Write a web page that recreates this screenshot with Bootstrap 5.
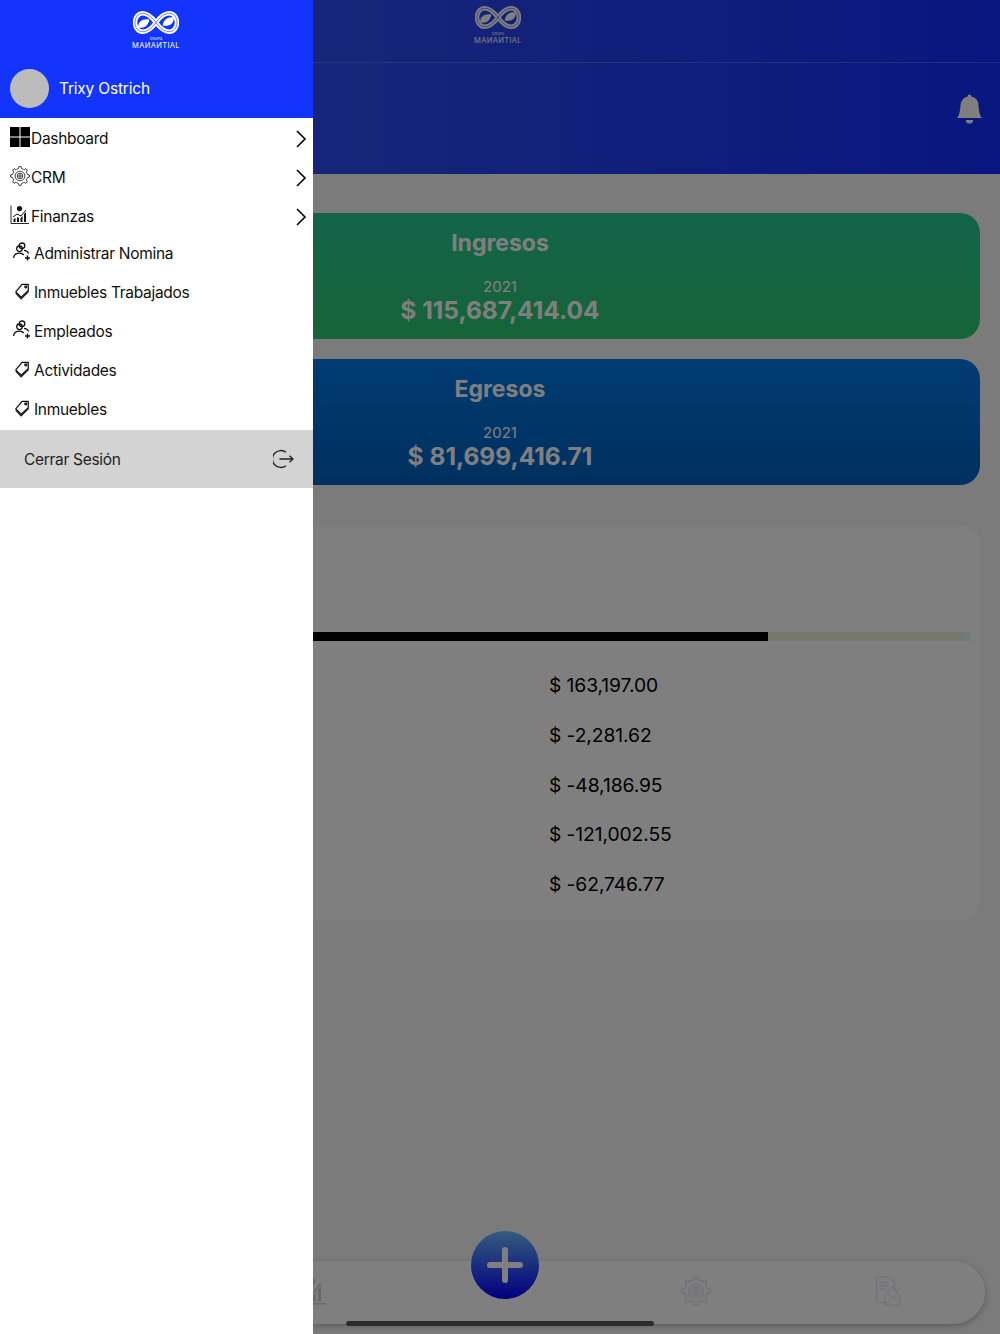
<!DOCTYPE html>
<html lang="es">
  <head>
    <meta charset="UTF-8" />
    <title>Grupo Manantial</title>
    <link
      href="https://cdn.jsdelivr.net/npm/bootstrap@5.3.0/dist/css/bootstrap.min.css"
      rel="stylesheet"
    />
    <style>
      html,
      body {
        height: 1334px;
        overflow: hidden;
      }

      body {
        font-family: Inter, "Liberation Sans", sans-serif;
        background-color: #f6f6f6;
        color: #000;
      }

      .app-page {
        height: 1334px;
      }

      /* header behind the drawer */
      .top-head {
        height: 174px;
        background: linear-gradient(90deg, #3552ff 0%, #2b49f0 40%, #142cff 100%);
        color: #fff;
      }

      .top-logo-bar {
        height: 63px;
        border-bottom: 1px solid rgba(255, 255, 255, 0.2);
        padding-top: 6px;
        padding-left: 474px;
        --logo-cut: #2b49f0;
      }

      .top-bell-bar {
        padding-top: 31px;
        padding-right: 16px;
      }

      .bell-icon {
        width: 29px;
        height: 30px;
      }

      .brand-logo {
        width: 48px;
        color: #fff;
      }

      .brand-logo svg {
        display: block;
        width: 46px;
        height: 23px;
        margin: 0 auto;
      }

      .brand-small {
        font-size: 3.5px;
        line-height: 4px;
        margin-top: 3px;
      }

      .brand-name {
        font-size: 7.5px;
        line-height: 9px;
        font-weight: 400;
        letter-spacing: 0.35px;
        white-space: nowrap;
      }

      /* summary cards */
      .main-area {
        padding: 39px 20px 0;
      }

      .sum-list {
        gap: 20px;
      }

      .sum-card {
        height: 126px;
        border-radius: 20px;
        color: #fff;
        padding-top: 15px;
      }

      .sum-green {
        background: linear-gradient(180deg, #28c896 0%, #2cc86e 100%);
      }

      .sum-blue {
        background: linear-gradient(180deg, #0078e6 0%, #0060be 100%);
      }

      .sum-title {
        font-size: 23px;
        line-height: 30px;
        font-weight: 700;
      }

      .sum-year {
        font-size: 15px;
        line-height: 20px;
        margin-top: 19px;
      }

      .sum-amount {
        font-size: 24.5px;
        line-height: 28px;
        margin-top: -1px;
        font-weight: 700;
      }

      .detail-card {
        height: 395px;
        border-radius: 20px;
        background-color: #fff;
        padding-top: 107px;
        margin-top: 40px;
      }

      .bar-track {
        height: 9px;
        margin-right: 10px;
        background-color: #e6f5f5;
      }

      .bar-fill {
        height: 9px;
        background-color: #000;
      }

      .bar-rest {
        background-color: #f0f0d2;
      }

      .amount-list {
        padding-left: 529px;
        padding-top: 20px;
        font-size: 19.3px;
        line-height: 49.75px;
        letter-spacing: -0.1px;
        margin: 0;
      }

      /* bottom tabs */
      .tab-area {
        position: absolute;
        left: 15px;
        right: 15px;
        top: 1261px;
        height: 63px;
        border-radius: 32px;
        background-color: #fff;
        box-shadow: 0 2px 6px rgba(0, 0, 0, 0.25);
      }

      .tab-icon {
        width: 30px;
        height: 30px;
        color: #e0e0f0;
        margin-top: 15px;
      }

      .tab-chart {
        margin-left: 12px;
        color: #d0d0d8;
      }

      .tab-gear {
        margin-left: 4px;
      }

      .add-btn {
        position: absolute;
        left: 456px;
        top: -30px;
        width: 68px;
        height: 68px;
        border-radius: 50%;
        background: linear-gradient(180deg, #6ab8ff 0%, #0000ff 100%);
      }

      .add-btn svg {
        width: 36px;
        height: 36px;
      }

      /* dim layer and drawer */
      .dim-layer {
        position: absolute;
        inset: 0;
        background-color: rgba(0, 0, 0, 0.5);
      }

      .home-line {
        position: absolute;
        left: 346px;
        top: 1321px;
        width: 308px;
        height: 5px;
        border-radius: 3px;
        background-color: #2c2c2c;
      }

      .side-drawer {
        position: absolute;
        left: 0;
        top: 0;
        bottom: 0;
        width: 312.5px;
        background-color: #fff;
      }

      .side-head {
        height: 118.5px;
        background-color: #1234fb;
        color: #fff;
        padding-top: 11px;
        border-bottom: 1px solid #fff;
        --logo-cut: #1234fb;
      }

      .side-logo {
        margin-left: 132px;
      }

      .side-user {
        margin-top: 19px;
        padding-left: 10px;
        gap: 10px;
        font-size: 15.5px;
        letter-spacing: -0.2px;
      }

      .side-avatar {
        width: 39px;
        height: 39px;
        border-radius: 50%;
        background-color: #bcbcbc;
      }

      .menu-row {
        height: 39px;
        padding: 2px 6px 0 10px;
        font-size: 15.5px;
        letter-spacing: -0.3px;
        color: #111;
      }

      .menu-sub {
        margin-top: -2px;
      }

      .sub-row {
        height: 39px;
        padding: 2px 0 0 12px;
        font-size: 15.5px;
        letter-spacing: -0.3px;
        color: #111;
      }

      .row-icon {
        width: 20px;
        height: 20px;
        margin-top: -4px;
        margin-right: 1px;
        flex-shrink: 0;
      }

      .sub-icon {
        width: 20px;
        height: 20px;
        margin-right: 2px;
        margin-top: -4px;
        flex-shrink: 0;
      }

      .row-arrow {
        width: 12px;
        height: 20px;
        margin-left: auto;
        margin-top: -1px;
      }

      .logout-row {
        height: 58px;
        margin-top: 1.5px;
        padding: 0 19px 0 24px;
        background-color: #d3d3d3;
        font-size: 15.5px;
        letter-spacing: -0.3px;
        color: #222;
      }

      .logout-label {
        padding-top: 2px;
      }

      .logout-icon {
        width: 21px;
        height: 20px;
        margin-left: auto;
      }
    </style>
  </head>
  <body class="position-relative">
    <svg width="0" height="0" class="position-absolute">
      <defs>
        <symbol id="ico-logo" viewBox="0 0 45 22">
          <path
            d="M22.5 11C17 4 13 2 9.5 2 5 2 2 6 2 11s3 9 7.5 9c3.5 0 8-2 13-9s9.5-9 13-9c4.5 0 7.5 4 7.5 9s-3 9-7.5 9c-3.5 0-8-2-13-9"
            fill="none"
            stroke="currentColor"
            stroke-width="4.4"
          />
          <path
            d="M22.5 11C17 4 13 2 9.5 2 5 2 2 6 2 11s3 9 7.5 9c3.5 0 8-2 13-9s9.5-9 13-9c4.5 0 7.5 4 7.5 9s-3 9-7.5 9c-3.5 0-8-2-13-9"
            fill="none"
            stroke="var(--logo-cut)"
            stroke-width="0.6"
          />
          <path
            d="M5 16c0-6 4-9 11-8-1 6-5 9-11 8zM40 6c0 6-4 9-11 8 1-6 5-9 11-8z"
            fill="currentColor"
          />
        </symbol>
        <symbol id="ico-gear" viewBox="0 0 20 20">
          <g fill="none" stroke="currentColor" stroke-width="0.8">
            <path
              id="gear-tooth"
              d="M7.13 3.07Q8 2.8 8.5 2.6L8.9.6h2.2l.4 2Q12 2.8 12.87 3.07"
            />
            <use href="#gear-tooth" transform="rotate(45 10 10)" />
            <use href="#gear-tooth" transform="rotate(90 10 10)" />
            <use href="#gear-tooth" transform="rotate(135 10 10)" />
            <use href="#gear-tooth" transform="rotate(180 10 10)" />
            <use href="#gear-tooth" transform="rotate(225 10 10)" />
            <use href="#gear-tooth" transform="rotate(270 10 10)" />
            <use href="#gear-tooth" transform="rotate(315 10 10)" />
            <circle cx="10" cy="10" r="4.8" />
            <circle cx="10" cy="10" r="2.8" />
            <path d="M7.5 10h5M10 7.2v5.6" />
          </g>
        </symbol>
        <symbol id="ico-chart" viewBox="0 0 20 20">
          <path
            d="M1 .5v18h18"
            fill="none"
            stroke="currentColor"
            stroke-width="0.9"
          />
          <path
            d="M3.5 17v-3l2-1v4zM7 17v-5l2 1v4zM10.5 17v-4l2-2v6zM14 17V9l2-2v10z"
            fill="currentColor"
          />
          <path d="M3 12l4-3 4 2 5-6" fill="none" stroke="currentColor" stroke-width="1" />
          <circle cx="9.5" cy="3.6" r="2.6" fill="currentColor" />
        </symbol>
        <symbol id="ico-user" viewBox="0 0 20 20">
          <g fill="none" stroke="currentColor" stroke-width="1.3">
            <circle cx="10" cy="3.8" r="2.8" />
            <circle cx="7.5" cy="6.8" r="2.8" />
            <path d="M1.5 16c.5-3.3 3-4.8 6-4.8 2 0 3.4.6 4.3 1.8M12 8.3c2.2.2 3.8 1.2 4.8 3.2" />
            <path d="M15.5 13.5v5M13 16h5" stroke-width="1.4" />
          </g>
        </symbol>
        <symbol id="ico-tag" viewBox="-2 -2 24 24">
          <g fill="none" stroke="currentColor" stroke-width="1.5" stroke-linejoin="round">
            <path d="M10 2h7.5v7.5L9 17.5 2.5 11z" />
            <path d="M2.5 12.5 9 19.5l9-9" />
            <circle cx="14.5" cy="5" r="1.2" />
          </g>
        </symbol>
        <symbol id="ico-doc" viewBox="0 0 30 34">
          <g fill="none" stroke="currentColor" stroke-width="1.1">
            <path d="M14 30H2V1h14l6 6v8" />
            <path d="M5 7h8M5 11h11M5 15h8" />
            <path d="M11 22l10-7 8 7v11H11z" />
            <path d="M11 33l8-8h4l6 8" />
            <circle cx="20" cy="18" r="5" />
          </g>
        </symbol>
      </defs>
    </svg>

    <div class="app-page">
      <header class="top-head">
        <div class="top-logo-bar">
          <div class="brand-logo text-center">
            <svg><use href="#ico-logo" /></svg>
            <div class="brand-small">GRUPO</div>
            <div class="brand-name">MAИAИTIAL</div>
          </div>
        </div>
        <div class="top-bell-bar d-flex justify-content-end">
          <svg class="bell-icon" viewBox="0 0 16 16" fill="#fff">
            <path
              d="M8 16a2 2 0 0 0 2-2H6a2 2 0 0 0 2 2zm.995-14.901a1 1 0 1 0-1.99 0A5.002 5.002 0 0 0 3 6c0 1.098-.5 6-2 7h14c-1.5-1-2-5.902-2-7 0-2.42-1.72-4.44-4.005-4.901z"
            />
          </svg>
        </div>
      </header>

      <main class="main-area">
        <div class="sum-list d-flex flex-column">
          <div class="sum-card sum-green text-center">
            <div class="sum-title">Ingresos</div>
            <div class="sum-year">2021</div>
            <div class="sum-amount">$ 115,687,414.04</div>
          </div>
          <div class="sum-card sum-blue text-center">
            <div class="sum-title">Egresos</div>
            <div class="sum-year">2021</div>
            <div class="sum-amount">$ 81,699,416.71</div>
          </div>
        </div>

        <div class="detail-card">
          <div class="bar-track d-flex">
            <div class="bar-fill" style="width: 78.7%"></div>
            <div class="bar-rest flex-grow-1 me-2"></div>
          </div>
          <ul class="amount-list list-unstyled">
            <li>$ 163,197.00</li>
            <li>$ -2,281.62</li>
            <li>$ -48,186.95</li>
            <li>$ -121,002.55</li>
            <li>$ -62,746.77</li>
          </ul>
        </div>
      </main>

      <nav class="tab-area d-grid">
        <div class="row g-0">
          <div class="col text-center"></div>
          <div class="col text-center">
            <svg class="tab-icon tab-chart"><use href="#ico-chart" /></svg>
          </div>
          <div class="col"></div>
          <div class="col text-center">
            <svg class="tab-icon tab-gear"><use href="#ico-gear" /></svg>
          </div>
          <div class="col text-center">
            <svg class="tab-icon"><use href="#ico-doc" /></svg>
          </div>
        </div>
        <div class="add-btn d-flex align-items-center justify-content-center">
          <svg viewBox="0 0 36 36">
            <path
              d="M18 3v30M3 18h30"
              stroke="#fff"
              stroke-width="6"
              stroke-linecap="round"
            />
          </svg>
        </div>
      </nav>
    </div>

    <div class="dim-layer"></div>
    <div class="home-line"></div>

    <aside class="side-drawer">
      <div class="side-head">
        <div class="brand-logo side-logo text-center">
          <svg><use href="#ico-logo" /></svg>
          <div class="brand-small">GRUPO</div>
          <div class="brand-name">MAИAИTIAL</div>
        </div>
        <div class="side-user d-flex align-items-center">
          <div class="side-avatar"></div>
          <span>Trixy Ostrich</span>
        </div>
      </div>

      <div class="menu-row d-flex align-items-center">
        <svg class="row-icon" viewBox="0 0 20 20" fill="#000">
          <path d="M0 0h9.5v9.5H0zM10.5 0H20v9.5h-9.5zM0 10.5h9.5V20H0zM10.5 10.5H20V20h-9.5z" />
        </svg>
        <span>Dashboard</span>
        <svg class="row-arrow" viewBox="0 0 12 20" fill="none" stroke="#000" stroke-width="1.6">
          <path d="M2 2l8 8-8 8" />
        </svg>
      </div>
      <div class="menu-row d-flex align-items-center">
        <svg class="row-icon"><use href="#ico-gear" /></svg>
        <span>CRM</span>
        <svg class="row-arrow" viewBox="0 0 12 20" fill="none" stroke="#000" stroke-width="1.6">
          <path d="M2 2l8 8-8 8" />
        </svg>
      </div>
      <div class="menu-row d-flex align-items-center">
        <svg class="row-icon"><use href="#ico-chart" /></svg>
        <span>Finanzas</span>
        <svg class="row-arrow" viewBox="0 0 12 20" fill="none" stroke="#000" stroke-width="1.6">
          <path d="M2 2l8 8-8 8" />
        </svg>
      </div>

      <div class="menu-sub">
        <div class="sub-row d-flex align-items-center">
          <svg class="sub-icon"><use href="#ico-user" /></svg>
          <span>Administrar Nomina</span>
        </div>
        <div class="sub-row d-flex align-items-center">
          <svg class="sub-icon"><use href="#ico-tag" /></svg>
          <span>Inmuebles Trabajados</span>
        </div>
        <div class="sub-row d-flex align-items-center">
          <svg class="sub-icon"><use href="#ico-user" /></svg>
          <span>Empleados</span>
        </div>
        <div class="sub-row d-flex align-items-center">
          <svg class="sub-icon"><use href="#ico-tag" /></svg>
          <span>Actividades</span>
        </div>
        <div class="sub-row d-flex align-items-center">
          <svg class="sub-icon"><use href="#ico-tag" /></svg>
          <span>Inmuebles</span>
        </div>
      </div>

      <div class="logout-row d-flex align-items-center">
        <span class="logout-label">Cerrar Sesión</span>
        <svg class="logout-icon" viewBox="0 0 21 20" fill="none" stroke="#222" stroke-width="1.3">
          <path d="M13 3.2A8.5 8.5 0 1 0 13 16.8" />
          <path d="M6.5 10h13.5M16.5 6.8 20 10l-3.5 3.2" />
        </svg>
      </div>
    </aside>
  </body>
</html>
